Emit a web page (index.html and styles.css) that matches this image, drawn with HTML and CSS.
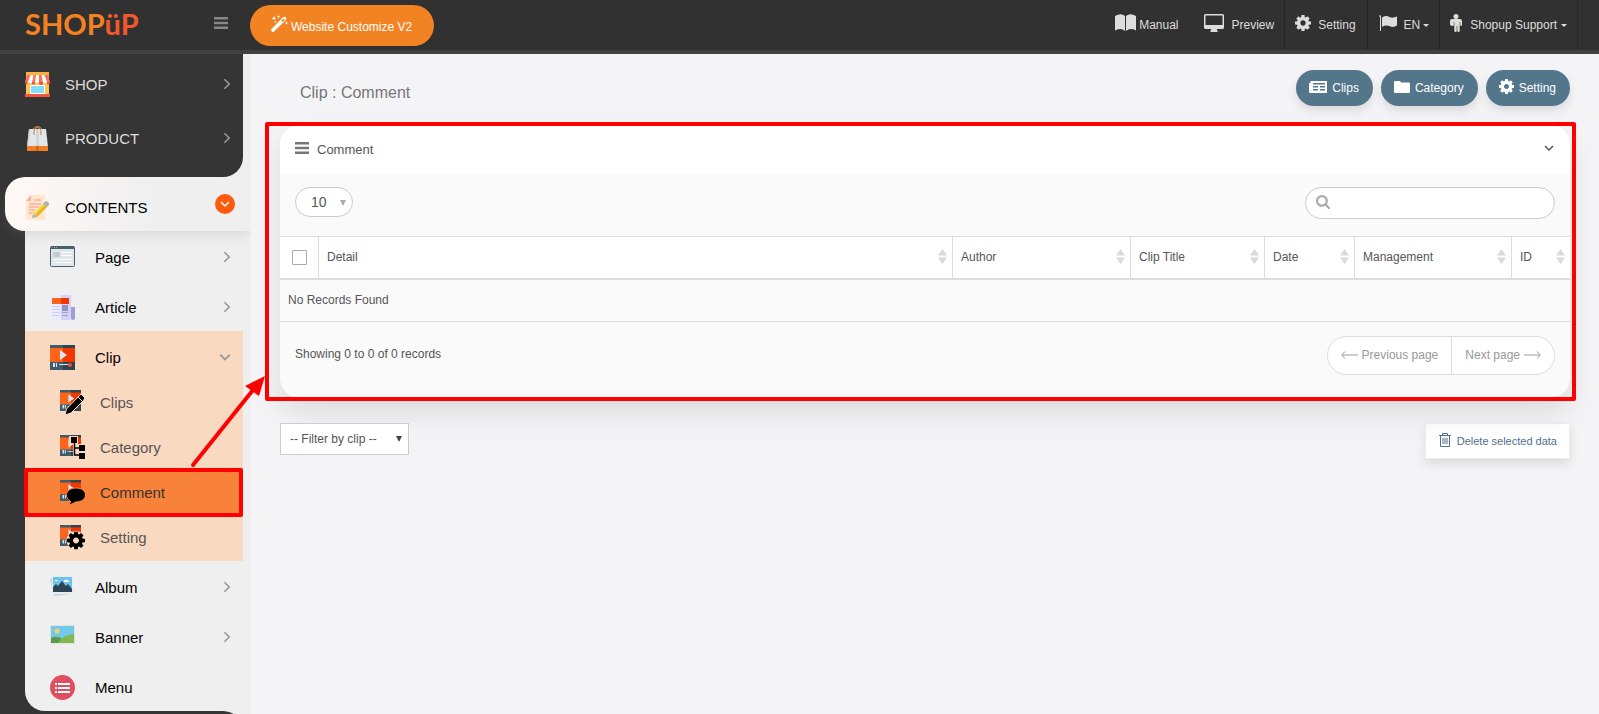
FILE: index.html
```html
<!DOCTYPE html>
<html lang="en">

<head>
    <meta charset="UTF-8">
    <meta name="viewport" content="width=device-width, initial-scale=1.0">
    <title>Clip : Comment - SHOPUP</title>
    <link rel="stylesheet" href="styles.css">
</head>

<body>

    <!-- Shared icons -->
    <svg class="sprite" aria-hidden="true">
        <symbol id="gear" viewBox="128 128 1536 1536">
            <path fill="currentColor" d="M1152 896q0-106-75-181t-181-75-181 75-75 181 75 181 181 75 181-75 75-181zm512-109v222q0 12-8 23t-20 13l-185 28q-19 54-39 91 35 50 107 138 10 12 10 25t-9 23q-27 37-99 108t-94 71q-12 0-26-9l-138-108q-44 23-91 38-16 136-29 186-7 28-36 28h-222q-14 0-24.500-8.500t-11.500-21.500l-28-184q-49-16-90-37l-141 107q-10 9-25 9-14 0-25-11-126-114-165-168-7-10-7-23 0-12 8-23 15-21 51-66.500t54-70.500q-27-50-41-99l-183-27q-13-2-21-12.500t-8-23.500v-222q0-12 8-23t19-13l186-28q14-46 39-92-40-57-107-138-10-12-10-24 0-10 9-23 26-36 98.500-107.500t94.500-71.500q13 0 26 10l138 107q44-23 91-38 16-136 29-186 7-28 36-28h222q14 0 24.500 8.500t11.500 21.500l28 184q49 16 90 37l142-107q9-9 24-9 13 0 25 10 129 119 165 170 7 8 7 22 0 12-8 23-15 21-51 66.500t-54 70.500q26 50 41 98l183 28q13 2 21 12.500t8 23.500z"/>
        </symbol>
        <symbol id="bars" viewBox="0 0 14 12">
            <path fill="currentColor" d="M0 0h14v2.500H0zM0 4.750h14v2.500H0zM0 9.500h14V12H0z"/>
        </symbol>
        <symbol id="chevron" viewBox="0 0 10 10">
            <path fill="none" stroke="currentColor" stroke-width="1.300" d="M4.500 1l4 4-4 4"/>
        </symbol>
        <symbol id="chevron-down" viewBox="0 0 10 10">
            <path fill="none" stroke="currentColor" stroke-width="1.500" d="M1 3l4 4 4-4"/>
        </symbol>
        <symbol id="sort" viewBox="0 0 9 15">
            <path fill="#d9d9d9" d="M4.500 0L9 6.500H0zM4.500 15L9 8.500H0z"/>
        </symbol>
        <symbol id="clip" viewBox="0 0 25 25">
            <path fill="#ff641a" d="M0 2h13v15H0z"/>
            <path fill="#f03800" d="M13 2h12v15H13z"/>
            <path fill="#3f5c6c" d="M0 0h13v3H0zM0 17h13v8H0z"/>
            <path fill="#2e4450" d="M13 0h12v3H13zM13 17h12v8H13z"/>
            <path fill="#dbe5f5" d="M10 5l7 5-7 5zM3 18h2v4H3zM6 18h1v4H6zM9 19h11v1H9z"/>
            <circle cx="20" cy="20" r="2" fill="#f0502a"/>
        </symbol>
    </svg>

    <header class="topbar">
        <div class="topbar-left">
            <a href="#" class="logo">SHOP<span>üP</span></a>
            <button class="toggle" aria-label="Toggle menu"><svg width="14" height="12"><use href="#bars"/></svg></button>
        </div>
        <a href="#" class="customize">
            <svg width="17" height="17" viewBox="0 0 17 17" fill="#fff">
                <path d="M0 14.500L12 2.300q1.500-1.200 2.800 0 1 1.200 0 2.600L2.600 17q-.800.200-1.700-.600-.900-1-.900-1.900zM10.200 5.800l1.300 1.300 2.300-2.400-1.200-1.100z" fill-rule="evenodd"/>
                <path d="M3 1l.700 1.600 1.600.700-1.600.700L3 5.600 2.300 4 .7 3.300l1.600-.700zM7.500 0l.500 1.300 1.300.500-1.300.500-.5 1.300L7 2.300l-1.300-.5L7 1.300zM15.500 6l.500 1.500 1 .5-1 .5-.5 1.300-.5-1.300-1.300-.5 1.300-.5zM4.500 5.500l.4 1 1 .4-1 .4-.4 1-.4-1-1-.4 1-.4z"/>
            </svg>
            Website Customize V2
        </a>
        <nav class="topnav">
            <a href="#" class="plain manual">
                <svg width="21" height="18" viewBox="0 0 21 18" fill="#ddd">
                  <path d="M0 2Q6-1.500 10 2v15Q6 13.500 0 16.500z"/><path d="M21 2Q15-1.500 11 2v15q4-3.500 10-.5z"/>
                </svg>
                Manual
            </a>
            <a href="#" class="preview">
                <svg width="20" height="18" viewBox="0 0 20 18" fill="#ddd">
                    <path fill-rule="evenodd" d="M1.500 0h17Q20 0 20 1.500v12q0 1.500-1.500 1.500H12.500l1 1.500V18h-7v-1.500l1-1.500H1.500Q0 15 0 13.500v-12Q0 0 1.500 0zM1.500 1.500v9.500h17V1.500z"/>
                </svg>
                Preview
            </a>
            <a href="#" class="setting"><svg width="16" height="16"><use href="#gear"/></svg>Setting</a>
            <a href="#" class="lang">
                <svg width="18" height="16" viewBox="0 0 18 16" fill="#ddd">
                    <path d="M0 1l1-1 1 1v15H1V2zM3 2.500q4-2.500 7.500-.5 3 1.500 7.500-.5v9q-4 2.500-7.500.5-3.500-1.500-7.500.7z"/>
                </svg>
                EN<i class="caret"></i>
            </a>
            <a href="#" class="user">
                <svg width="12" height="18" viewBox="0 0 12 18" fill="#ddd">
                    <circle cx="6" cy="2.500" r="2.500"/>
                    <path d="M2 5h8q2 0 2 2v4q0 1-.9 1t-.9-1V8h-.5v9q0 1-1.200 1t-1.200-1v-5h-.6v5q0 1-1.200 1t-1.200-1V8h-.5v3q0 1-.9 1T0 11V7q0-2 2-2z"/>
                </svg>
                Shopup Support<i class="caret"></i>
            </a>
        </nav>
    </header>

    <div class="layout">
        <aside class="sidebar">
            <ul class="menu group">
                <li><a href="#">
                    <svg class="icon" viewBox="0 0 25 25">
                        <path fill="#ffc44f" d="M1 2h23v21H1z"/>
                        <path fill="#fdb33b" d="M1 0h23v4H1z"/>
                        <path fill="#ff7058" d="M2 3h21l2 7v1H0v-1z"/>
                        <path fill="#fff" d="M5.500 3h3L7 11H2.500zM11 3h3v8h-4zM16.500 3h3l3 8H18z"/>
                        <path fill="#e8503e" d="M0 10h2.500v1a1.200 1.200 0 0 1-2.500 0zM7 10h3v1a1.500 1.500 0 0 1-3 0zM14 10h4v1a2 2 0 0 1-4 0zM22 10h3v1a1.500 1.500 0 0 1-3 0z"/>
                        <path fill="#fff" d="M5 13h15v9H5z"/><path fill="#84dbff" d="M6 14h13v7H6z"/>
                        <path fill="#f1543f" d="M0 22h25v3H0z"/>
                    </svg>
                    SHOP <svg class="arrow" width="12" height="12"><use href="#chevron"/></svg></a></li>
                <li><a href="#">
                    <svg class="icon" viewBox="0 0 25 25">
                        <path fill="none" stroke="#c98347" d="M8 9V5q0-4 4.500-4.500Q17 1 17 5v4M10 7V4q.500-2 2.500-3 2 1 2.500 3v3"/>
                        <path fill="#e0e6e9" d="M4 3h17l2 18H2z"/><path fill="#cfd7db" d="M11 3h3v18h-3zM4 3L2 21h1L6 3z"/>
                        <path fill="#ef7f22" d="M2 20h21v5H2z"/><path fill="#d86a15" d="M11 20h3v5h-3z"/>
                        <path fill="none" stroke="#c98347" d="M9 9V5q0-3 3.500-4Q16 2 16 5v4"/>
                    </svg>
                    PRODUCT <svg class="arrow" width="12" height="12"><use href="#chevron"/></svg></a></li>
            </ul>

            <a href="#" class="current">
                <svg class="icon" viewBox="0 0 25 25">
                    <path fill="#ffe6cc" d="M5 0h15v25H1V5z"/><path fill="#ffb09c" d="M6 0v6H1z"/>
                    <path stroke="#ffab98" stroke-width="1.300" d="M9 5h7M4 9h12M4 12h10M4 15h6M4 18h4"/>
                    <path fill="#fdd835" d="M8 19L20 7l4 3-12 12z"/><path fill="#e3b52a" d="M10 20L22 8l2 2-12 12z"/>
                    <path fill="#a9b4bd" d="M18 9l3-3q2 0 3.500 3L21.500 12zM7 23l1-4 4 3z"/>
                </svg>
                CONTENTS
                <span class="badge"><svg width="10" height="10"><use href="#chevron-down"/></svg></span>
            </a>

            <ul class="menu panel">
                <li><a href="#">
                    <svg class="icon" viewBox="0 0 25 25">
                        <rect x=".5" y="1.500" width="24" height="20" rx="1" fill="#dfe7ea" stroke="#4a6374"/>
                        <path fill="#46606f" d="M1 1h23v3H1z"/><path fill="#e0563d" d="M2 2h1v1H2z"/><path fill="#e5b33d" d="M4 2h1v1H4z"/><path fill="#6dc26d" d="M6 2h1v1H6z"/>
                        <path fill="#c3ccd3" d="M3 7h7v5H3z"/><path stroke="#fff" d="M11 7.500h11M11 10.500h11M3 14.500h19M3 17.500h19"/>
                    </svg>
                    Page <svg class="arrow" width="12" height="12"><use href="#chevron"/></svg></a></li>
                <li><a href="#">
                    <svg class="icon" viewBox="0 0 25 25">
                        <path fill="#ecebff" d="M0 0h11v25H2q-2 0-2-2z"/><path fill="#d5d3f5" d="M11 0h10v25H11z"/>
                        <path fill="#a09ed1" d="M21 12h4v11q0 2-2 2t-2-2z"/>
                        <path fill="#ff641a" d="M2 3h9v6H2z"/><path fill="#f03800" d="M11 3h8v6h-8z"/>
                        <path stroke="#d0cdf2" d="M2 11.500h8M2 14.500h8M2 17.500h8M2 20.500h8"/>
                        <path stroke="#a09ed1" d="M12 11.500h6M12 17.500h6M12 20.500h6"/><path fill="#9491c8" d="M12 10h6v6h-6z"/>
                    </svg>
                    Article <svg class="arrow" width="12" height="12"><use href="#chevron"/></svg></a></li>
                <li class="open"><a href="#"><svg class="icon"><use href="#clip"/></svg>
                    Clip <svg class="arrow" width="12" height="12"><use href="#chevron-down"/></svg></a>
                    <ul class="submenu">
                        <li><a href="#"><svg class="icon" viewBox="0 0 25 25">
                            <use href="#clip" width="21" height="21"/>
                            <path fill="#000" stroke="#fad9c1" d="M5 25l1.500-6L19 6l2-2 4 4-2 3L11 23z"/><path stroke="#fad9c1" d="M18 7l5 5"/>
                        </svg>Clips</a></li>
                        <li><a href="#"><svg class="icon" viewBox="0 0 25 25">
                            <use href="#clip" width="21" height="21"/>
                            <path fill="#fad9c1" d="M9 1h9v8h7v16h-8l-4-2V9H9z"/>
                            <path fill="none" stroke="#000" stroke-width="1.500" d="M14.500 7v13H21M14.500 13H21"/>
                            <path d="M11 2h6v6h-6zM19 10h6v6h-6zM19 18h6v6h-6z"/>
                        </svg>Category</a></li>
                        <li class="active"><a href="#"><svg class="icon" viewBox="0 0 25 25">
                            <use href="#clip" width="21" height="21"/>
                            <path stroke="#f9823a" d="M16 8c6 0 9.500 3 9.500 7s-4 7-10 7c-3 2-5 2.500-7 2.500 1.500-1 2-2 2-3.500-2.500-1-4-3-4-6 0-4 4-7 9.500-7z"/>
                        </svg>Comment</a></li>
                        <li><a href="#"><svg class="icon" viewBox="0 0 25 25">
                            <use href="#clip" width="21" height="21"/>
                            <circle cx="16" cy="15.500" r="9.500" fill="#fad9c1"/>
                            <use href="#gear" x="7" y="6.500" width="18" height="18" color="#000"/>
                        </svg>Setting</a></li>
                    </ul>
                </li>
                <li><a href="#">
                    <svg class="icon" viewBox="0 0 25 25">
                        <path fill="#c9d1d9" d="M0 4l3-1v14l18-1 .500 3L4 21zM19 0l5 17-2 1z"/><path fill="#e8edf0" d="M2 1h21v18H2z"/>
                        <path fill="#6cc5e8" d="M3 2h19v15H3z"/><path fill="#fff" d="M5 5h3v1H5zM14 6q1-2 3-1 2 0 2 2h-5z"/>
                        <path fill="#2c4358" d="M3 17v-5l3-3 2 2 4-5 4 5 2-2 4 5v3z"/>
                    </svg>
                    Album <svg class="arrow" width="12" height="12"><use href="#chevron"/></svg></a></li>
                <li><a href="#">
                    <svg class="icon" viewBox="0 0 25 25">
                        <path fill="#dce4e6" d="M0 0h25v19H0z"/><path fill="#75c9e8" d="M1 1h23v17H1z"/>
                        <circle cx="7" cy="6" r="2.500" fill="#f4cf70"/>
                        <path fill="#5c9a49" d="M1 13q5-3 12 1v4H1z"/><path fill="#82b854" d="M8 18q4-8 16-9v9z"/>
                    </svg>
                    Banner <svg class="arrow" width="12" height="12"><use href="#chevron"/></svg></a></li>
                <li><a href="#">
                    <svg class="icon" viewBox="0 0 25 25">
                        <circle cx="12.500" cy="12.500" r="12.500" fill="#e04f5f"/>
                        <path fill="#fff" d="M5 8h2v2H5zM8 8h12v2H8zM5 12h2v2H5zM8 12h12v2H8zM5 16h2v2H5zM8 16h12v2H8z"/>
                    </svg>
                    Menu</a></li>
            </ul>

            <div class="group group-next"></div>
        </aside>

        <main>
            <div class="page-head">
                <h1>Clip : Comment</h1>
                <div class="actions">
                    <a href="#" class="pill">
                        <svg width="18" height="12" viewBox="0 0 18 12"><path fill="#fff" fill-rule="evenodd" d="M1.500 0H18v12H1.500Q0 12 0 10.500V2h1.500zM4 2v1.500h12V2zM4 5v1.500h5V5zM11 5v1.500h5V5zM4 8v1.500h5V8zM11 8v1.500h5V8z"/></svg>
                        Clips</a>
                    <a href="#" class="pill">
                        <svg width="16" height="12" viewBox="0 0 16 12"><path fill="#fff" d="M1 0h5l1 1.500h8q1 0 1 1V11q0 1-1 1H1q-1 0-1-1V1q0-1 1-1z"/></svg>
                        Category</a>
                    <a href="#" class="pill">
                        <svg width="15" height="15"><use href="#gear"/></svg>
                        Setting</a>
                </div>
            </div>

            <section class="card">
                <div class="card-head">
                    <svg width="14" height="12"><use href="#bars"/></svg>
                    <h2>Comment</h2>
                    <button class="collapse" aria-label="Collapse"><svg width="10" height="10"><use href="#chevron-down"/></svg></button>
                </div>

                <div class="tools">
                    <div class="length">
                        <select aria-label="Records per page">
                            <option>10</option>
                            <option>25</option>
                            <option>50</option>
                        </select>
                    </div>
                    <div class="search">
                        <svg width="14" height="14" viewBox="64 128 1664 1664"><path fill="#aaa" d="M1216 832q0-185-131.500-316.500t-316.500-131.500-316.500 131.500-131.500 316.500 131.500 316.500 316.500 131.500 316.500-131.500 131.500-316.500zm512 832q0 52-38 90t-90 38q-54 0-90-38l-343-342q-179 124-399 124-143 0-273.500-55.500t-225-150-150-225-55.500-273.500 55.500-273.500 150-225 225-150 273.500-55.500 273.500 55.500 225 150 150 225 55.500 273.500q0 220-124 399l343 343q37 37 37 90z"/></svg>
                        <input type="text" aria-label="Search">
                    </div>
                </div>

                <table>
                    <thead>
                        <tr>
                            <th class="col-check"><input type="checkbox" aria-label="Select all"></th>
                            <th><div>Detail <svg width="9" height="15"><use href="#sort"/></svg></div></th>
                            <th class="col-author"><div>Author <svg width="9" height="15"><use href="#sort"/></svg></div></th>
                            <th class="col-title"><div>Clip Title <svg width="9" height="15"><use href="#sort"/></svg></div></th>
                            <th class="col-date"><div>Date <svg width="9" height="15"><use href="#sort"/></svg></div></th>
                            <th class="col-manage"><div>Management <svg width="9" height="15"><use href="#sort"/></svg></div></th>
                            <th class="col-id"><div>ID <svg width="9" height="15"><use href="#sort"/></svg></div></th>
                        </tr>
                    </thead>
                    <tbody>
                        <tr>
                            <td colspan="7">No Records Found</td>
                        </tr>
                    </tbody>
                </table>

                <div class="card-foot">
                    <p>Showing 0 to 0 of 0 records</p>
                    <div class="pager">
                        <button><svg width="17" height="8" viewBox="0 0 17 8"><path fill="none" stroke="#999" d="M17 4H1M4 .5L.7 4 4 7.500"/></svg>Previous page</button>
                        <button>Next page<svg width="17" height="8" viewBox="0 0 17 8"><path fill="none" stroke="#999" d="M0 4h16M13 .5L16.300 4 13 7.500"/></svg></button>
                    </div>
                </div>
            </section>

            <div class="below">
                <div class="filter">
                    <select aria-label="Filter by clip">
                        <option>-- Filter by clip --</option>
                    </select>
                </div>
                <button class="delete">
                    <svg width="12" height="14" viewBox="0 0 12 14"><path fill="none" stroke="#4f6f8f" d="M0 2.500h12M3.500 2V.5h5V2M1.500 2.500v11h9v-11M4 5v6M6 5v6M8 5v6"/></svg>
                    Delete selected data
                </button>
            </div>
        </main>
    </div>

    <!-- Arrow from the active menu item to the comment list -->
    <svg class="pointer" width="80" height="96" viewBox="0 0 80 96" aria-hidden="true">
        <path stroke="#f00" stroke-width="4" stroke-linecap="round" d="M7 92L67 17"/>
        <path fill="#f00" d="M79 3L59 13l14 10z"/>
    </svg>

</body>

</html>
```
FILE: styles.css
```css
* {
    box-sizing: border-box;
}

body {
    font-family: "Liberation Sans", Arial, sans-serif;
    font-size: 12px;
    margin: 0;
    background-color: #f4f4f6;
    color: #555;
    position: relative;
}

a {
    color: inherit;
    text-decoration: none;
}

ul {
    list-style: none;
    margin: 0;
    padding: 0;
}

button,
select,
input {
    font-family: inherit;
    font-size: inherit;
    color: inherit;
}

svg {
    flex-shrink: 0;
}

.sprite {
    position: absolute;
    width: 0;
    height: 0;
}

/* Top bar */
.topbar {
    display: flex;
    align-items: flex-start;
    height: 54px;
    background-color: #313131;
    border-bottom: 4px solid #414141;
    color: #ddd;
}

.topbar-left {
    display: flex;
    justify-content: space-between;
    align-items: center;
    width: 250px;
    height: 46px;
    padding: 0 22px 0 25px;
}

.logo {
    font-family: Lato, sans-serif;
    font-size: 29px;
    font-weight: bold;
    color: #f58220;
}

.logo span {
    color: #f1582c;
}

.toggle,
.collapse {
    display: flex;
    padding: 0;
    border: none;
    background: none;
    color: #888;
    cursor: pointer;
}

.customize {
    display: flex;
    align-items: center;
    gap: 3px;
    height: 41px;
    margin-top: 5px;
    padding: 2px 22px 0 21px;
    border-radius: 21px;
    background-color: #f28322;
    color: #fff;
}

.customize svg {
    margin-bottom: 6px;
}

.topnav {
    display: flex;
    margin-left: auto;
    padding-right: 21px;
}

.topnav a {
    display: flex;
    align-items: center;
    gap: 7px;
    height: 50px;
    padding: 0 10px;
    border-right: 1px solid #262626;
}

.topnav svg {
    margin-bottom: 5px;
}

.topnav .plain {
    border-right: none;
    gap: 3px;
    padding-right: 15px;
}

.topnav .preview,
.topnav .user {
    gap: 8px;
}

.topnav .setting {
    padding-right: 11px;
}

.topnav .lang {
    padding-left: 11px;
}

.caret {
    margin-left: -4px;
    border: 3px solid transparent;
    border-top-color: #ddd;
    border-bottom: none;
}

/* Sidebar */
.layout {
    display: flex;
    height: calc(100vh - 54px);
    min-height: 600px;
}

.sidebar {
    flex: 0 0 251px;
    overflow: hidden;
    background: linear-gradient(to right, #353535 80px, #efefef 80px);
}

.group {
    width: 243px;
    padding: 3px 0 12px;
    background-color: #353535;
    border-bottom-right-radius: 20px;
    color: #ddd;
}

.group-next {
    height: 60px;
    border-radius: 0 20px 0 0;
}

.menu a,
.current {
    display: flex;
    align-items: center;
    gap: 20px;
    height: 50px;
    padding: 2px 12px 0 25px;
    font-size: 15px;
}

.menu.group a {
    height: 54px;
    padding-top: 0;
    gap: 15px;
}

.icon {
    width: 25px;
    height: 25px;
}

.arrow {
    margin-left: auto;
    color: #999;
}

.current {
    position: relative;
    gap: 15px;
    height: 54px;
    margin-left: 5px;
    padding: 6px 16px 0 20px;
    border-radius: 20px 0 0 20px;
    background: linear-gradient(to right, #fff9f6, #efefef 150px);
    box-shadow: 0 6px 12px -2px rgba(128, 128, 128, 0.2);
    color: #000;
}

.badge {
    display: flex;
    align-items: center;
    justify-content: center;
    width: 20px;
    height: 20px;
    margin: 0 0 6px auto;
    border-radius: 50%;
    background-color: #fc5a0d;
    color: #fff;
}

.panel {
    margin-left: 25px;
    border-bottom-left-radius: 20px;
    background-color: #efefef;
    color: #000;
}

.panel a {
    width: 218px;
}

.open {
    width: 218px;
    background-color: #fad9c1;
}

.menu .submenu a {
    gap: 15px;
    height: 45px;
    padding: 0 0 2px 35px;
    color: #555;
}

.submenu .active {
    position: relative;
    background-color: #f9823a;
}

.menu .submenu .active a {
    color: #333;
}

/* Red highlight frames */
.active::after,
.card::after {
    content: "";
    position: absolute;
    inset: -3px 0 -1px -1px;
    border: 4px solid #f00;
    border-radius: 2px;
    pointer-events: none;
}

.card::after {
    inset: -3px -6px -3px -15px;
}

.pointer {
    position: absolute;
    left: 186px;
    top: 373px;
}

/* Main */
main {
    flex: 1;
    min-width: 0;
    padding: 16px 29px 0;
}

.page-head {
    display: flex;
    justify-content: space-between;
    align-items: center;
    height: 36px;
    margin-bottom: 19px;
    padding-left: 20px;
}

h1 {
    margin: 10px 0 0;
    font-size: 16px;
    font-weight: normal;
    color: #777;
}

.actions {
    display: flex;
    gap: 8px;
}

.pill {
    display: flex;
    align-items: center;
    gap: 5px;
    height: 36px;
    padding: 0 14px 0 13px;
    border-radius: 18px;
    background-color: #53768a;
    box-shadow: 0 5px 10px rgba(0, 0, 0, 0.1);
    color: #fff;
}

.pill svg {
    margin-bottom: 3px;
}

.card {
    position: relative;
    border-radius: 20px;
    background-color: #fafafa;
    box-shadow: 0 15px 30px rgba(0, 0, 0, 0.1);
}

.card-head {
    display: flex;
    align-items: center;
    gap: 8px;
    height: 50px;
    padding: 0 16px 4px 15px;
    border-radius: 20px 20px 0 0;
    background-color: #fff;
}

.card-head > svg {
    color: #777;
}

h2 {
    margin: 2px 0 0;
    font-size: 13px;
    font-weight: normal;
}

.collapse {
    margin-left: auto;
    color: #555;
}

.tools {
    display: flex;
    justify-content: space-between;
    align-items: flex-start;
    height: 61px;
    padding: 12px 15px;
}

.length,
.filter,
.search {
    position: relative;
}

select {
    appearance: none;
    border: 1px solid #ccc;
    background-color: #fff;
}

.length select {
    width: 58px;
    height: 30px;
    padding: 0 15px;
    border-radius: 15px;
    font-size: 14px;
}

/* Drop-down arrows */
.length::after,
.filter::after {
    content: "";
    position: absolute;
    right: 7px;
    top: 13px;
    border: 3px solid transparent;
    border-top: 6px solid #aaa;
    border-bottom: none;
    pointer-events: none;
}

.filter::after {
    border-top-color: #444;
}

.search svg {
    position: absolute;
    left: 11px;
    top: 8px;
}

.search input {
    display: block;
    width: 250px;
    height: 32px;
    padding: 0 15px 0 32px;
    border: 1px solid #ccc;
    border-radius: 16px;
    background-color: #fff;
}

table {
    width: 100%;
    table-layout: fixed;
    border-collapse: separate;
    border-spacing: 0;
}

th {
    height: 44px;
    padding: 0 5px 2px 8px;
    border-top: 1px solid #ddd;
    border-bottom: 2px solid #ddd;
    border-right: 1px solid #ddd;
    background-color: #fff;
    font-weight: normal;
    text-align: left;
}

th:last-child {
    border-right: none;
}

th div {
    display: flex;
    justify-content: space-between;
    align-items: center;
}

th.col-check {
    width: 39px;
    padding: 0;
    text-align: center;
}

.col-check input {
    appearance: none;
    display: block;
    width: 15px;
    height: 15px;
    margin: 0 auto;
    border: 1px solid #aaa;
    border-radius: 1px;
    background-color: #fff;
}

.col-author {
    width: 178px;
}

.col-title {
    width: 134px;
}

.col-date {
    width: 90px;
}

.col-manage {
    width: 157px;
}

.col-id {
    width: 58px;
}

td {
    height: 42px;
    padding: 0 8px 2px;
    border-bottom: 1px solid #ddd;
}

.card-foot {
    display: flex;
    justify-content: space-between;
    align-items: flex-start;
    height: 76px;
    padding: 14px 15px;
}

.card-foot p {
    margin: 11px 0 0;
}

.pager {
    display: flex;
    border: 1px solid #ddd;
    border-radius: 20px;
    background-color: #fff;
}

.pager button {
    display: flex;
    align-items: center;
    gap: 4px;
    height: 37px;
    padding: 0 13px 2px;
    border: none;
    background: none;
    color: #999;
}

.pager button + button {
    border-left: 1px solid #ddd;
}

.below {
    display: flex;
    justify-content: space-between;
    margin-top: 25px;
}

.filter select {
    width: 129px;
    height: 32px;
    padding: 0 9px;
}

.delete {
    display: flex;
    align-items: center;
    gap: 6px;
    height: 36px;
    padding: 0 12px 0 13px;
    border: 1px solid #eee;
    background-color: #fff;
    box-shadow: 0 5px 10px rgba(0, 0, 0, 0.1);
    color: #4f6f8f;
    font-size: 11px;
    cursor: pointer;
}

.delete svg {
    margin-bottom: 3px;
}
```
